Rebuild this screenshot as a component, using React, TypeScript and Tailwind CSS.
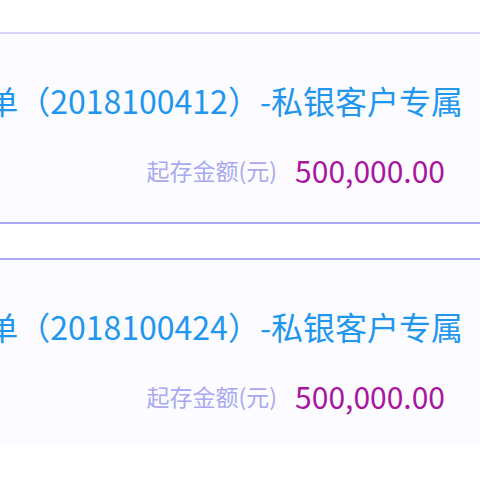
const FONT = '"Noto Sans CJK SC", "Noto Sans", sans-serif'

type Deposit = { code: string; amount: string }

const deposits: Deposit[] = [
    { code: "2018100412", amount: "500,000.00" },
    { code: "2018100424", amount: "500,000.00" },
]

const DepositCard = ({ item, first }: { item: Deposit; first: boolean }) => {
    return (
        <div className={`bg-[#fcfbff] border-t-2 ${first ? "border-[#d8d6fb] border-b-2 border-b-[#aaa7f3] pb-[34px]" : "border-[#aaa7f3] pb-[32px]"} pt-[46px]`}>
            <div className="flex justify-end overflow-hidden whitespace-nowrap pr-[17px]">
                <span className="text-[32px] leading-[40px] text-[#2196ee]">
                    定期存单（{item.code}）-私银客户专属
                </span>
            </div>
            <div className="flex justify-end items-center gap-[18px] pr-[35px] mt-[32px] whitespace-nowrap">
                <span className="text-[23px] leading-[36px] text-[#a9a9f0]">起存金额(元)</span>
                <span className="text-[30px] leading-[36px] text-[#a8169e]">{item.amount}</span>
            </div>
        </div>
    )
}

export default function App() {
    return (
        <div className="w-[480px] h-[480px] bg-white overflow-hidden" style={{ fontFamily: FONT }}>
            <div className="h-[32px]" />
            <div className="flex flex-col gap-[34px]">
                {deposits.map((d, i) => (
                    <DepositCard key={d.code} item={d} first={i === 0} />
                ))}
            </div>
        </div>
    )
}
